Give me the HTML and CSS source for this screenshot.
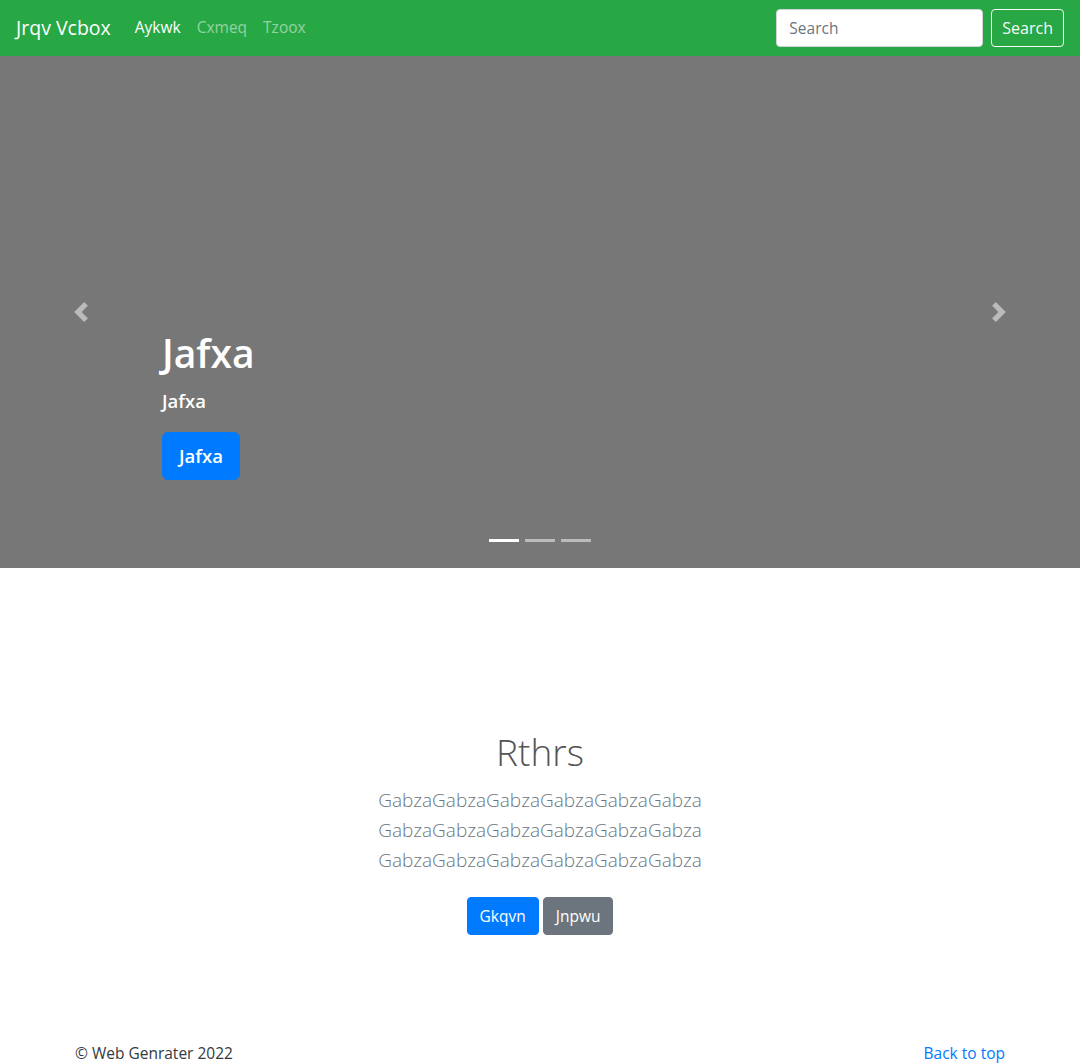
FILE: index.html
```html
<!DOCTYPE html>
<html lang="en">
<head>
<meta charset="utf-8">
<title>Carousel</title>
<link rel="stylesheet" href="styles.css">
</head>
<body>
<header class="navbar">
  <a class="brand" href="#">Jrqv Vcbox</a>
  <nav class="nav">
    <a class="nav-link active" href="#">Aykwk</a>
    <a class="nav-link" href="#">Cxmeq</a>
    <a class="nav-link" href="#">Tzoox</a>
  </nav>
  <form class="search">
    <input class="search-input" type="text" placeholder="Search">
    <button class="btn btn-outline" type="button">Search</button>
  </form>
</header>

<section class="carousel">
  <a class="control control-prev" href="#">
    <svg width="20" height="20" viewBox="0 0 8 8"><path fill="#fff" d="M5.25 0l-4 4 4 4 1.5-1.5L4.25 4l2.5-2.5L5.25 0z"/></svg>
  </a>
  <div class="caption">
    <h1 class="caption-title">Jafxa</h1>
    <p class="caption-text">Jafxa</p>
    <a class="btn btn-lg btn-primary" href="#">Jafxa</a>
  </div>
  <a class="control control-next" href="#">
    <svg width="20" height="20" viewBox="0 0 8 8"><path fill="#fff" d="M2.75 0l-1.5 1.5L3.75 4l-2.5 2.5L2.75 8l4-4-4-4z"/></svg>
  </a>
  <ol class="indicators">
    <li class="active"></li>
    <li></li>
    <li></li>
  </ol>
</section>

<main class="marketing">
  <h2 class="display">Rthrs</h2>
  <p class="lead">GabzaGabzaGabzaGabzaGabzaGabza<br>GabzaGabzaGabzaGabzaGabzaGabza<br>GabzaGabzaGabzaGabzaGabzaGabza</p>
  <div class="actions">
    <a class="btn btn-primary" href="#">Gkqvn</a>
    <a class="btn btn-secondary" href="#">Jnpwu</a>
  </div>
</main>

<footer class="footer">
  <p class="copy">© Web Genrater 2022</p>
  <a class="top-link" href="#">Back to top</a>
</footer>
</body>
</html>
```

FILE: styles.css
```css
* { box-sizing: border-box; }
html, body { margin: 0; padding: 0; }
body {
  font-family: "Segoe UI", "Open Sans", "Noto Sans", sans-serif;
  font-size: 16px;
  line-height: 1.5;
  color: #212529;
  background: #fff;
}
a { text-decoration: none; }

.navbar {
  display: flex;
  align-items: center;
  height: 56px;
  padding: 8px 16px;
  background: #28a745;
}
.brand {
  font-size: 19.5px;
  line-height: 30px;
  color: #fff;
  margin-right: 16px;
}
.nav { display: flex; flex: 1; }
.nav-link {
  padding: 8px;
  font-size: 15.5px;
  color: rgba(255,255,255,.5);
}
.nav-link.active { color: #fff; }
.search { display: flex; align-items: center; }
.search-input {
  width: 207px;
  height: 38px;
  padding: 6px 12px;
  font: inherit;
  font-size: 15.5px;
  color: #495057;
  border: 1px solid #ced4da;
  border-radius: 4px;
  margin-right: 8px;
  background: #fff;
}
.search-input::placeholder { color: #6c757d; }

.btn {
  display: inline-block;
  font: inherit;
  padding: 6px 12px;
  line-height: 24px;
  border: 1px solid transparent;
  border-radius: 4px;
  color: #fff;
  background: transparent;
  cursor: pointer;
}
.btn-outline { border-color: #f8f9fa; color: #f8f9fa; padding: 6px 10px; }
.btn-primary { background: #007bff; border-color: #007bff; }
.btn-secondary { background: #6c757d; border-color: #6c757d; }
.btn-lg { padding: 8px 16px; font-size: 20px; line-height: 30px; border-radius: 6px; }

.carousel {
  position: relative;
  height: 512px;
  background: #777;
  margin-bottom: 64px;
}
.control {
  position: absolute;
  top: 0;
  bottom: 0;
  width: 15%;
  display: flex;
  align-items: center;
  justify-content: center;
  opacity: .5;
}
.control-prev { left: 0; }
.control-next { right: 0; }
.caption {
  position: absolute;
  left: 15%;
  right: 15%;
  bottom: 48px;
  padding: 20px 0 40px;
  color: #fff;
}
.caption-title {
  margin: 0 0 10px;
  font-size: 39px;
  line-height: 48px;
  font-weight: 600;
}
.caption-text {
  margin: 0 0 17px;
  font-size: 18.5px;
  font-weight: 600;
}
.caption .btn-lg { font-weight: 600; font-size: 18.5px; padding: 8px 16px; }
.indicators {
  position: absolute;
  left: 0;
  right: 0;
  bottom: 26px;
  display: flex;
  justify-content: center;
  list-style: none;
  margin: 0;
  padding: 0;
}
.indicators li {
  width: 30px;
  height: 3px;
  margin: 0 3px;
  background: #fff;
  opacity: .5;
}
.indicators li.active { opacity: 1; }

.marketing {
  text-align: center;
  padding-top: 96px;
  padding-bottom: 48px;
}
.display {
  margin: 0 0 9px;
  font-size: 37px;
  line-height: 48px;
  font-weight: 300;
  color: #555;
}
.lead {
  margin: 0 0 16px;
  font-size: 19px;
  line-height: 30px;
  font-weight: 300;
  color: #6c757d;
}
.actions { display: flex; justify-content: center; gap: 4px; padding-top: 6px; }
.actions .btn { font-size: 15.5px; }

.footer {
  width: 960px;
  margin: 0 auto;
  padding: 59px 15px 0;
  display: flex;
  justify-content: space-between;
}
.copy { margin: 0; color: #343a40; font-size: 15.5px; }
.top-link { color: #007bff; font-size: 15.5px; }
```
